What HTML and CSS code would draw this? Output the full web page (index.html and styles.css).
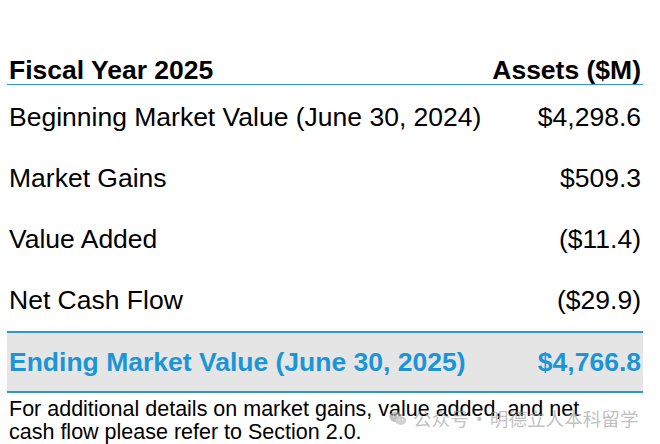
FILE: index.html
```html
<!DOCTYPE html>
<html lang="en">
<head>
<meta charset="utf-8">
<title>Fiscal Year 2025</title>
<link rel="stylesheet" href="styles.css">
</head>
<body>
<div class="page">
  <div class="table">
    <div class="row head">
      <span>Fiscal Year 2025</span>
      <span>Assets ($M)</span>
    </div>
    <div class="body">
      <div class="row item"><span>Beginning Market Value (June 30, 2024)</span><span>$4,298.6</span></div>
      <div class="row item"><span>Market Gains</span><span>$509.3</span></div>
      <div class="row item"><span>Value Added</span><span>($11.4)</span></div>
      <div class="row item"><span>Net Cash Flow</span><span>($29.9)</span></div>
    </div>
    <div class="row total"><span>Ending Market Value (June 30, 2025)</span><span>$4,766.8</span></div>
  </div>
  <p class="note">For additional details on market gains, value added, and net<br>cash flow please refer to Section 2.0.</p>
  <div class="watermark">
    <svg class="wm-icon" width="18" height="15" viewBox="0 0 22 18">
      <ellipse cx="8" cy="7" rx="7.5" ry="6.3" fill="#a9a9a9"/>
      <ellipse cx="14.5" cy="11.5" rx="6.5" ry="5.3" fill="#bdbdbd"/>
      <circle cx="5.5" cy="5.5" r="1" fill="#fff"/>
      <circle cx="10.5" cy="5.5" r="1" fill="#fff"/>
      <circle cx="12.3" cy="10.5" r="0.8" fill="#fff"/>
      <circle cx="16.7" cy="10.5" r="0.8" fill="#fff"/>
    </svg>
    <span class="wm-text">公众号<span class="wm-dot">·</span>明德立人本科留学</span>
  </div>
</div>
</body>
</html>
```

FILE: styles.css
```css
html, body {
  margin: 0;
  padding: 0;
  background: #ffffff;
}
.page {
  position: relative;
  width: 660px;
  height: 444px;
  font-family: "Liberation Sans", Arial, sans-serif;
  color: #000000;
}
.table {
  margin-left: 7px;
  width: 636px;
  padding-top: 56px;
}
.row {
  display: flex;
  justify-content: space-between;
  padding: 0 2px 0 2px;
  font-size: 26.5px;
}
.head {
  font-weight: bold;
  line-height: 28px;
  border-bottom: 1px solid #2e97d2;
}
.body {
  padding-top: 2px;
}
.item {
  line-height: 61px;
}
.total {
  font-weight: bold;
  color: #1b95d6;
  background: #e5e5e5;
  line-height: 58px;
  border-top: 2px solid #2a98d8;
  border-bottom: 2px solid #2a98d8;
}
.note {
  margin: 0;
  padding: 5px 0 0 9px;
  font-size: 21.5px;
  line-height: 23px;
}
.watermark {
  position: absolute;
  left: 389px;
  top: 407px;
  display: flex;
  align-items: center;
  gap: 6px;
  white-space: nowrap;
  color: rgba(150, 150, 150, 0.6);
  font-family: "Noto Sans CJK SC", sans-serif;
  font-size: 18.6px;
  line-height: 22px;
}
.wm-icon {
  opacity: 0.7;
}
.wm-dot {
  display: inline-block;
  width: 21px;
  text-align: center;
}
```
